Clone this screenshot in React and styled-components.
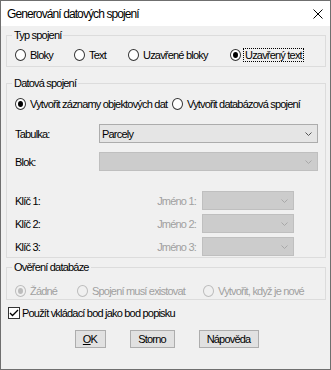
import React from "react";
import styled, { createGlobalStyle } from "styled-components";

const GlobalStyle = createGlobalStyle`
  html, body {
    margin: 0;
    padding: 0;
    background: #ffffff;
  }
  body {
    font-family: "Liberation Sans", Arial, sans-serif;
    font-size: 11px;
    letter-spacing: -0.8px;
    color: #000;
  }
`;

const Window = styled.div`
  width: 331px;
  height: 370px;
  box-sizing: border-box;
  border: 1px solid #6f6f6f;
  background: #f0f0f0;
  display: flex;
  flex-direction: column;
`;

const TitleBar = styled.div`
  height: 25px;
  background: #ffffff;
  display: flex;
  align-items: center;
  justify-content: space-between;
  padding: 0 7px 0 6px;
`;

const Title = styled.span`
  font-size: 12px;
  letter-spacing: -0.9px;
  color: #000;
`;

const Body = styled.div`
  padding: 0 4px 0 5px;
  display: flex;
  flex-direction: column;
`;

const Group = styled.fieldset`
  margin: ${(p) => p.$mt}px 0 0 0;
  padding: ${(p) => p.$pt}px 7px ${(p) => p.$pb}px 8px;
  border: 1px solid #dcdcdc;
  min-width: 0;
`;

const Legend = styled.legend`
  padding: 0 2px;
  margin-left: -3px;
  line-height: 13px;
  font-size: 11px;
`;

const RadioRow = styled.div`
  display: flex;
  height: 13px;
  align-items: center;
`;

const RadioItem = styled.label`
  display: flex;
  align-items: center;
  width: ${(p) => (p.$w ? `${p.$w}px` : "auto")};
  flex: ${(p) => (p.$w ? "none" : "1")};
  white-space: nowrap;
`;

const RadioCircle = styled.span`
  width: 11px;
  height: 12px;
  box-sizing: border-box;
  border-radius: 50%;
  border: 1px solid ${(p) => (p.$disabled ? "#bcbcbc" : "#333333")};
  background: ${(p) => (p.$disabled ? "#f0f0f0" : "#ffffff")};
  display: flex;
  align-items: center;
  justify-content: center;
  margin-right: 3px;
  flex: none;

  &::after {
    content: "";
    display: ${(p) => (p.$checked ? "block" : "none")};
    width: 5px;
    height: 6px;
    border-radius: 50%;
    background: ${(p) => (p.$disabled ? "#bcbcbc" : "#000000")};
  }
`;

const ItemText = styled.span`
  color: ${(p) => (p.$disabled ? "#a0a0a0" : "#000")};
  line-height: 12px;
  padding: 0 1px;
  outline: ${(p) => (p.$focus ? "1px dotted #000" : "none")};
`;

const FormRow = styled.div`
  display: flex;
  align-items: center;
  margin-top: ${(p) => p.$mt}px;
`;

const FieldLabel = styled.span`
  width: 84px;
  flex: none;
`;

const Combo = styled.div`
  height: 19px;
  box-sizing: border-box;
  flex: ${(p) => (p.$w ? "none" : "1")};
  width: ${(p) => (p.$w ? `${p.$w}px` : "auto")};
  margin-right: ${(p) => p.$mr || 0}px;
  background: ${(p) => (p.$disabled ? "#cccccc" : "#e5e5e5")};
  border: 1px solid ${(p) => (p.$disabled ? "#bfbfbf" : "#acacac")};
  display: flex;
  align-items: center;
  padding: 0 5px 0 2px;
`;

const ComboText = styled.span`
  flex: 1;
`;

const KeyLabel = styled.span`
  flex: 1;
`;

const NameLabel = styled.span`
  color: #a0a0a0;
  margin-right: 6px;
`;

const CheckRow = styled.label`
  display: flex;
  align-items: center;
  height: 13px;
  margin: 6px 0 0 2px;
`;

const CheckBox = styled.span`
  width: 12px;
  height: 12px;
  box-sizing: border-box;
  border: 1px solid #333333;
  background: #ffffff;
  display: flex;
  align-items: center;
  justify-content: center;
  margin-right: 2px;
`;

const Buttons = styled.div`
  display: flex;
  justify-content: center;
  gap: 24px;
  margin-top: 11px;
  padding-left: 1px;
`;

const Button = styled.button`
  width: ${(p) => p.$w}px;
  height: 18px;
  box-sizing: border-box;
  padding: 0;
  background: #e1e1e1;
  border: 1px solid #adadad;
  font-family: inherit;
  font-size: 11px;
  letter-spacing: -0.8px;
  color: #000;

  u {
    text-decoration: underline;
  }
`;

const Chevron = ({ disabled }) => (
  <svg width="7" height="4" viewBox="0 0 7 4">
    <polyline
      points="0.5,0.5 3.5,3.5 6.5,0.5"
      fill="none"
      stroke={disabled ? "#a8a8a8" : "#555555"}
      strokeWidth="1"
    />
  </svg>
);

const Radio = ({ w, checked, disabled, focus, children }) => (
  <RadioItem $w={w}>
    <RadioCircle $checked={checked} $disabled={disabled} />
    <ItemText $disabled={disabled} $focus={focus}>
      {children}
    </ItemText>
  </RadioItem>
);

const keys = [1, 2, 3];

export default function App() {
  return (
    <>
      <GlobalStyle />
      <Window>
        <TitleBar>
          <Title>Generování datových spojení</Title>
          <svg width="10" height="10" viewBox="0 0 10 10">
            <path d="M0.5 0.5 L9.5 9.5 M9.5 0.5 L0.5 9.5" stroke="#000" strokeWidth="1" />
          </svg>
        </TitleBar>
        <Body>
          <Group $mt={3} $pt={6} $pb={5}>
            <Legend>Typ spojení</Legend>
            <RadioRow>
              <Radio w={59}>Bloky</Radio>
              <Radio w={54}>Text</Radio>
              <Radio w={102}>Uzavřené bloky</Radio>
              <Radio checked focus>
                Uzavřený text
              </Radio>
            </RadioRow>
          </Group>

          <Group $mt={10} $pt={7} $pb={1}>
            <Legend>Datová spojení</Legend>
            <RadioRow>
              <Radio w={157} checked>
                Vytvořit záznamy objektových dat
              </Radio>
              <Radio>Vytvořit databázová spojení</Radio>
            </RadioRow>
            <FormRow $mt={14}>
              <FieldLabel>Tabulka:</FieldLabel>
              <Combo>
                <ComboText>Parcely</ComboText>
                <Chevron />
              </Combo>
            </FormRow>
            <FormRow $mt={9}>
              <FieldLabel>Blok:</FieldLabel>
              <Combo $disabled>
                <ComboText />
                <Chevron disabled />
              </Combo>
            </FormRow>
            {keys.map((k) => (
              <FormRow key={k} $mt={k === 1 ? 20 : 4}>
                <KeyLabel>Klíč {k}:</KeyLabel>
                <NameLabel>Jméno {k}:</NameLabel>
                <Combo $disabled $w={92} $mr={24}>
                  <ComboText />
                  <Chevron disabled />
                </Combo>
              </FormRow>
            ))}
          </Group>

          <Group $mt={3} $pt={10} $pb={2}>
            <Legend>Ověření databáze</Legend>
            <RadioRow>
              <Radio w={62} checked disabled>
                Žádné
              </Radio>
              <Radio w={126} disabled>
                Spojení musí existovat
              </Radio>
              <Radio disabled>Vytvořit, když je nové</Radio>
            </RadioRow>
          </Group>

          <CheckRow>
            <CheckBox>
              <svg width="10" height="8" viewBox="0 0 10 8">
                <polyline points="1,4 3.5,6.5 9,1" fill="none" stroke="#000" strokeWidth="1.3" />
              </svg>
            </CheckBox>
            Použít vkládací bod jako bod popisku
          </CheckRow>

          <Buttons>
            <Button $w={31}>
              <u>O</u>K
            </Button>
            <Button $w={45}>Storno</Button>
            <Button $w={60}>Nápověda</Button>
          </Buttons>
        </Body>
      </Window>
    </>
  );
}
